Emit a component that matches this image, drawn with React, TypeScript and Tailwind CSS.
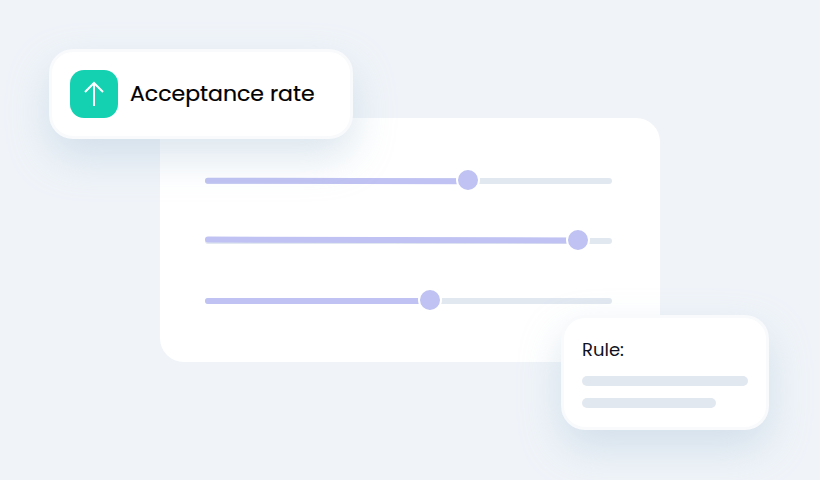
const sliders = [
  { fill: 263, tilt: "-mt-[0.5px] rotate-[0.12deg]" },
  { fill: 373, tilt: "-mt-[1.5px] rotate-[0.12deg]" },
  { fill: 225, tilt: "" },
];

function Slider({ fill, tilt }: { fill: number; tilt: string }) {
  return (
    <div className="relative h-[6px] rounded-full bg-[#e2e8f0]">
      <div className={`h-[6px] rounded-full bg-[#bfc2f2] ${tilt}`} style={{ width: fill }} />
      <div
        className="absolute top-[-10px] h-6 w-6 rounded-full border-2 border-white bg-[#bfc2f2]"
        style={{ left: fill - 12 }}
      />
    </div>
  );
}

export default function App() {
  return (
    <div className="relative h-[480px] w-[820px] overflow-hidden bg-[#f0f4f9] pl-[160px] pt-[118px] font-['Poppins','Inter','Liberation_Sans',sans-serif]">
      <div className="flex h-[244px] w-[500px] flex-col gap-[54px] rounded-[24px] bg-white pl-[45px] pr-[48px] pt-[60px]">
        {sliders.map((s, i) => (
          <Slider key={i} fill={s.fill} tilt={s.tilt} />
        ))}
      </div>

      <div className="absolute left-[49px] top-[49px] flex h-[90px] w-[304px] items-center gap-3 rounded-[24px] border-[3px] border-[#f8fafc] bg-white pl-[18px] shadow-[0_18px_40px_rgba(170,195,215,0.42)]">
        <div className="flex h-12 w-12 items-center justify-center rounded-[14px] bg-[#14d1b1]">
          <svg width="24" height="28" viewBox="0 0 24 28" fill="none" stroke="#fff" strokeWidth="2">
            <path d="M12 26V3M3 12l9-9 9 9" />
          </svg>
        </div>
        <span className="text-[22px] font-normal leading-none text-black [-webkit-text-stroke:0.2px_#000]">
          Acceptance rate
        </span>
      </div>

      <div className="absolute left-[561px] top-[315px] flex h-[115px] w-[208px] flex-col rounded-[24px] border-[3px] border-[#f8fafc] bg-white pl-[18px] pr-[18px] pt-[21px] shadow-[0_18px_40px_rgba(170,195,215,0.42)]">
        <span className="text-[18px] leading-[22px] text-[#0f1222]">Rule:</span>
        <div className="mt-[15px] h-[10px] w-[166px] rounded-full bg-[#e2e8f0]" />
        <div className="mt-3 h-[10px] w-[134px] rounded-full bg-[#e2e8f0]" />
      </div>
    </div>
  );
}
